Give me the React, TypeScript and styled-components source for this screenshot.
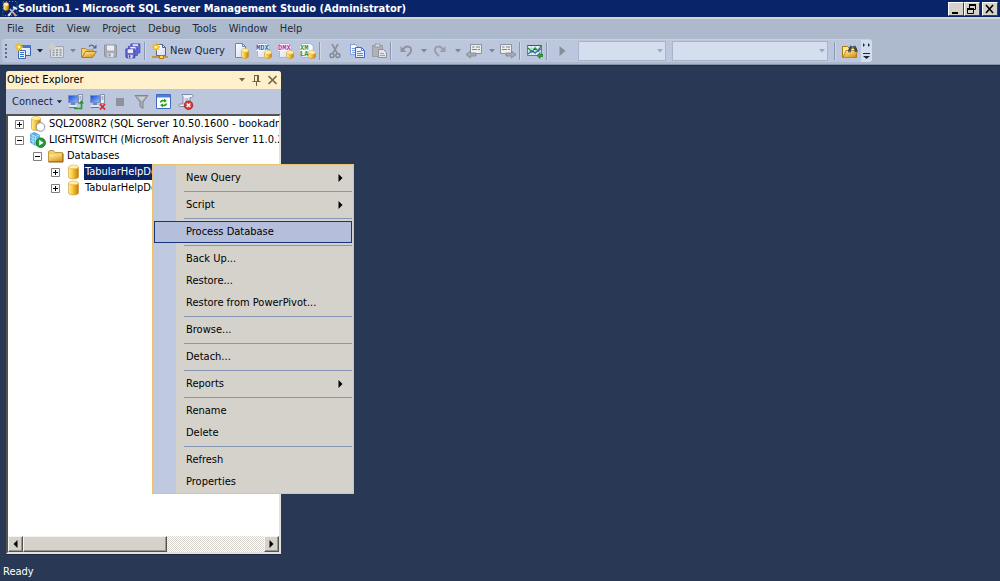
import React from "react";
import styled, { createGlobalStyle, css } from "styled-components";

const GlobalStyle = createGlobalStyle`
  * { box-sizing: border-box; }
  body {
    margin: 0;
    background: #293955;
    color: #000;
    font: 11px/16px "DejaVu Sans Condensed", "Liberation Sans", sans-serif;
  }
  button, select { font: inherit; color: inherit; border: 0; padding: 0; margin: 0; }
  button { background: none; cursor: default; }
  ul { list-style: none; margin: 0; padding: 0; }
`;

const Window = styled.div`
  min-height: 100vh;
  display: flex;
  flex-direction: column;
`;

const TitleBar = styled.header`
  display: flex;
  align-items: center;
  height: 17px;
  padding: 0 2px;
  background: #0a246a;
  color: #fff;
`;

const Title = styled.h1`
  flex: 1;
  margin: 0;
  font-size: 11px;
  line-height: 16px;
  font-weight: bold;
  white-space: nowrap;
`;

const CaptionButton = styled.button<{ $gap?: boolean }>`
  display: flex;
  width: 16px;
  height: 14px;
  margin-left: ${(p) => (p.$gap ? 2 : 0)}px;
  background: #d5d2cb;
  border: 1px solid;
  border-color: #fff #404040 #404040 #fff;
`;

const MenuBar = styled.nav`
  display: flex;
  align-items: center;
  height: 22px;
  padding-left: 7px;
  gap: 12px;
  background: #adb9cd;
  border-top: 2px solid #d5d5d2;
  color: #1b293e;
`;

const ToolStrip = styled.div`
  padding-bottom: 2px;
  background: #adb9cd;
  border-bottom: 1px solid #8592a8;
  box-shadow: 0 1px 0 #1f2c44;
`;

const ToolBar = styled.div`
  display: flex;
  align-items: center;
  width: max-content;
  height: 23px;
  margin-left: 2px;
  padding-left: 3px;
  background: #bcc7de;
  border-top: 1px solid #c8d1e2;
  border-radius: 3px;
  color: #1b293e;
`;

const Grip = styled.span`
  width: 2px;
  height: 14px;
  margin-right: 5px;
  background: repeating-linear-gradient(#5f6e8c 0 2px, transparent 2px 4px);
`;

const ToolButton = styled.button`
  display: flex;
  align-items: center;
  flex: none;
  height: 22px;
  padding: 0 3px;
  gap: 3px;
  white-space: nowrap;
`;

const QueryButton = styled(ToolButton)`
  width: 82px;
  gap: 2px;
`;

const DropButton = styled.button<{ $wide?: boolean; $muted?: boolean }>`
  display: flex;
  justify-content: center;
  align-items: center;
  width: ${(p) => (p.$wide ? 12 : 11)}px;
  height: 22px;
  color: ${(p) => (p.$muted ? "#7f8592" : "#1b293e")};
`;

const Divider = styled.span<{ $left?: number }>`
  width: 5px;
  height: 18px;
  margin-left: ${(p) => p.$left ?? 0}px;
  border-left: 1px solid #8b97b0;
  background: linear-gradient(#d0d8e8, #d0d8e8) left / 1px 100% no-repeat;
`;

const Combo = styled.span<{ $width: number; $left: number }>`
  position: relative;
  display: flex;
  align-items: center;
  width: ${(p) => p.$width}px;
  margin-left: ${(p) => p.$left}px;
  color: #9ea8ba;
  select {
    appearance: none;
    width: 100%;
    height: 20px;
    background: #d5deee;
    border: 1px solid #a9b4c9;
    opacity: 1;
  }
  svg { position: absolute; right: 3px; pointer-events: none; }
`;

const Overflow = styled.button`
  display: flex;
  width: 11px;
  height: 22px;
  background: #d5deee;
  border-radius: 0 3px 3px 0;
`;

const Workspace = styled.main`
  position: relative;
  display: flex;
  flex: 1;
  padding: 6px 6px 8px;
`;

const Panel = styled.section`
  display: flex;
  flex-direction: column;
  width: 275px;
  background: #bcc7de;
  border-radius: 3px 3px 0 0;
  box-shadow: 0 1px 0 #1c2a44;
`;

const PanelHeader = styled.header`
  display: flex;
  align-items: center;
  height: 18px;
  padding: 0 3px 0 1px;
  gap: 5px;
  background: #fff0cc;
  border-radius: 3px 3px 0 0;
  color: #75633d;
  h2 {
    flex: 1;
    margin: 0;
    font-size: 11px;
    line-height: 16px;
    font-weight: normal;
    color: #000;
  }
  button { display: flex; }
`;

const PanelTools = styled.div`
  display: flex;
  align-items: center;
  height: 25px;
  padding: 0 3px;
  color: #1b293e;
`;

const ConnectButton = styled(ToolButton)`
  width: 56px;
`;

const TreeFrame = styled.div`
  display: flex;
  flex-direction: column;
  flex: 1;
  min-height: 0;
  background: #fff;
  border: 2px solid;
  border-color: #55534f #e4e2dd #e4e2dd #55534f;
`;

const Tree = styled.ul`
  flex: 1;
  overflow: hidden;
`;

const TreeRow = styled.li<{ $level: number }>`
  display: flex;
  align-items: center;
  height: 16px;
  padding-left: ${(p) => 7 + p.$level * 18}px;
  white-space: nowrap;
  svg { flex: none; }
  > svg { margin: 0 2px 0 6px; }
`;

const NodeLabel = styled.span<{ $selected?: boolean }>`
  padding: 0 1px;
  line-height: 16px;
  ${(p) =>
    p.$selected &&
    css`
      background: #0a246a;
      color: #fff;
    `}
`;

const Expander = styled.button`
  display: flex;
  flex: none;
`;

const ScrollBar = styled.div`
  display: flex;
  height: 16px;
  background: repeating-conic-gradient(#fff 0 25%, #d9d6cf 0 50%) 0 0 / 2px 2px;
`;

const raised = css`
  background: #d5d2cb;
  border: 1px solid;
  border-color: #f4f3f0 #55534f #55534f #f4f3f0;
  box-shadow: inset -1px -1px 0 #9a978f;
`;

const ScrollArrow = styled.button`
  display: flex;
  align-items: center;
  justify-content: center;
  flex: none;
  width: 15px;
  && { ${raised} }
`;

const ScrollThumb = styled.span`
  width: 144px;
  ${raised}
`;

const ScrollSpace = styled.span`
  flex: 1;
`;

const ContextMenu = styled.div`
  position: absolute;
  left: 152px;
  top: 99px;
  width: 202px;
  padding: 2px 1px 0;
  background: linear-gradient(90deg, #bfc9df 23px, #d5d2cc 23px);
  border: 1px solid #e8c36c;
`;

const MenuItem = styled.button<{ $active?: boolean }>`
  display: flex;
  align-items: center;
  justify-content: space-between;
  width: 100%;
  height: 22px;
  padding: 0 9px 0 32px;
  text-align: left;
  ${(p) =>
    p.$active &&
    css`
      && {
        background: #b5bfdb;
        border: 1px solid #17347f;
        padding: 0 8px 0 31px;
      }
    `}
`;

const MenuLine = styled.hr`
  height: 5px;
  margin: 0 0 0 30px;
  border: 0;
  background: linear-gradient(#8796b5, #8796b5) 0 2px / 100% 1px no-repeat;
`;

const StatusBar = styled.footer`
  height: 19px;
  padding-left: 3px;
  line-height: 20px;
  color: #fff;
`;

/* ---- icons ---- */

const Ico = ({ children, w = 16, h = 16 }: { children: React.ReactNode; w?: number; h?: number }) => (
  <svg width={w} height={h} viewBox={`0 0 ${w} ${h}`} aria-hidden="true" fill="none">
    {children}
  </svg>
);

const HiddenSvg = styled.svg`
  position: absolute;
`;

const Gradients = () => (
  <HiddenSvg width="0" height="0" aria-hidden="true">
    <defs>
      <linearGradient id="gold">
        <stop offset="0" stopColor="#fff0a0" />
        <stop offset="0.4" stopColor="#fbc93c" />
        <stop offset="1" stopColor="#c07c10" />
      </linearGradient>
      <linearGradient id="folder" x2="0.6" y2="1">
        <stop offset="0" stopColor="#fff3a8" />
        <stop offset="1" stopColor="#e3961a" />
      </linearGradient>
      <linearGradient id="screen" x2="1" y2="1">
        <stop offset="0" stopColor="#1c3fd0" />
        <stop offset="1" stopColor="#8fc4ff" />
      </linearGradient>
      <linearGradient id="page" x2="1" y2="1">
        <stop offset="0" stopColor="#fff" />
        <stop offset="1" stopColor="#cfdcf2" />
      </linearGradient>
    </defs>
  </HiddenSvg>
);

const Caret = () => (
  <Ico w={7} h={4}>
    <path d="M1 0h6L4 3.500z" fill="currentColor" />
  </Ico>
);

const Cylinder = ({ x = 0, y = 0, w = 10, h = 14 }) => (
  <g transform={`translate(${x} ${y})`}>
    <path
      d={`M.5 2.5v${h - 5}c0 2.6 ${w - 1} 2.6 ${w - 1} 0v-${h - 5}`}
      fill="url(#gold)"
      stroke="#c9912a"
      strokeWidth=".6"
    />
    <ellipse cx={w / 2} cy="2.4" rx={w / 2 - 0.5} ry="1.9" fill="#fff0a8" stroke="#e0b040" strokeWidth=".6" />
  </g>
);

const Spark = () => (
  <>
    <path d="M4 0v8M0 4h8M1.200 1.200l5.600 5.600M6.800 1.200L1.200 6.800" stroke="#f6b90e" strokeWidth="1.500" />
    <circle cx="4" cy="4" r="1.600" fill="#fff3b0" />
  </>
);

const AppIcon = () => (
  <Ico>
    <path d="M1 .5h14v14H1z" stroke="#4ba33c" strokeDasharray="1 2" />
    <Cylinder x={1} y={1} w={6} h={9} />
    <path d="M6 15l7-8M8 8l6 7" stroke="#aeb7c4" strokeWidth="1.800" />
    <path d="M11 6l4 2M6.500 14.500l2-2" stroke="#e3e6ea" strokeWidth="2" />
    <path d="M11.500 12l3 3" stroke="#d8a060" strokeWidth="1.600" />
  </Ico>
);

const NewProject = () => (
  <Ico>
    <path d="M4.500 2.500h11v10h-11z" fill="url(#page)" stroke="#3866b0" />
    <path d="M4 2h12v3H4z" fill="#3f78d8" />
    <path d="M3.500 7.500h7v8h-7z" fill="#e8f1ff" stroke="#3c68b4" />
    <path d="M5 9.500h4M5 11.500h4M5 13.500h4" stroke="#3a6fc4" />
    <Spark />
  </Ico>
);

const NewItemMuted = () => (
  <Ico>
    <path d="M2.500 3.500h13v11h-13z" fill="#dcdde0" stroke="#a1a5ae" />
    <path d="M4.500 7h10M4.500 9.500h10M4.500 12h10" stroke="#8d929c" strokeWidth="1.400" strokeDasharray="2 1.500" />
    <path d="M4 0v8M0 4h8M1.500 1.500l5 5M6.500 1.500l-5 5" stroke="#cfcdc8" strokeWidth="1.400" />
  </Ico>
);

const OpenFolder = () => (
  <Ico>
    <path d="M.5 14.500v-9h4l1.500 1.500h6v3" fill="#f7d268" stroke="#b58a2c" />
    <path d="M1 14.500L4.500 8.500h11l-4 6z" fill="url(#folder)" stroke="#b07a18" />
    <path d="M8 3.500c1.500-2 4-2 5.500.5" stroke="#4d6a98" strokeWidth="1.300" />
    <path d="M15.500 1.500v4h-4z" fill="#4d6a98" />
  </Ico>
);

const Disk = ({ fill, edge, x = 0, y = 0, s = 1 }: { fill: string; edge: string; x?: number; y?: number; s?: number }) => (
  <g transform={`translate(${x} ${y}) scale(${s})`}>
    <path d="M.5.5h12v12h-11l-1-1z" fill={fill} stroke={edge} />
    <path d="M3 1h7v5H3z" fill="#eceef4" />
    <path d="M3.500 8.500h6v4h-6z" fill="#dfe2ea" />
    <path d="M4.500 9h2v3h-2z" fill={edge} />
  </g>
);

const Save = () => (
  <Ico>
    <Disk x={1} y={1.5} fill="#a7abb4" edge="#8f949f" />
  </Ico>
);

const SaveAll = () => (
  <Ico>
    <Disk x={5.5} y={0.5} s={0.75} fill="#6b70dc" edge="#3a3bb0" />
    <Disk x={3} y={3} s={0.75} fill="#6b70dc" edge="#3a3bb0" />
    <Disk x={0.5} y={5.5} s={0.75} fill="#6468dc" edge="#3334a4" />
  </Ico>
);

const NewQuery = () => (
  <Ico>
    <path d="M4.500 1.500h6l3 3v8h-9z" fill="url(#page)" stroke="#52678f" />
    <path d="M10.500 1.500v3h3" stroke="#52678f" />
    <Spark />
    <path d="M0 14h16M9.500 12v2" stroke="#c98416" strokeWidth="1.600" />
    <path d="M7.500 12.500h4v3h-4z" fill="#ffd65a" stroke="#b87612" />
  </Ico>
);

const DbPage = () => (
  <Ico>
    <path d="M1.500.5h7l3 3v11h-10z" fill="url(#page)" stroke="#7086b0" />
    <path d="M8.500.5v3h3" stroke="#7086b0" />
    <Cylinder x={7} y={5} w={8} h={11} />
  </Ico>
);

const QueryKind = ({ top, bottom, color }: { top: string; bottom?: string; color: string }) => (
  <Ico>
    <path d="M1.500.5h9l3 3v11h-12z" fill="url(#page)" stroke="#a9b7d2" />
    <path d="M0 2h12v6H0z" fill="#f6f9ff" />
    <text x="0" y="7" fontSize="7" fontWeight="bold" fontFamily="Liberation Mono, monospace" fill={color}>
      {top}
    </text>
    {bottom && (
      <text x="0" y="13" fontSize="7" fontWeight="bold" fontFamily="Liberation Mono, monospace" fill={color}>
        {bottom}
      </text>
    )}
    <Cylinder x={8} y={7} w={8} h={9} />
  </Ico>
);

const Cut = () => (
  <Ico>
    <path d="M5 1l5 9M11 1L6 10" stroke="#8b909b" strokeWidth="1.600" />
    <circle cx="5" cy="12.500" r="2" stroke="#81868f" strokeWidth="1.400" />
    <circle cx="10.800" cy="12.500" r="2" stroke="#81868f" strokeWidth="1.400" />
  </Ico>
);

const Copy = () => (
  <Ico>
    <path d="M1.500 1.500h5l3 3v7h-8z" fill="#f4f8ff" stroke="#7f9bdc" />
    <path d="M3 5.500h4M3 7.500h4M3 9.500h4" stroke="#7c9ce0" />
    <path d="M6.500 4.500h6l3 3v7h-9z" fill="#eaf1ff" stroke="#3f66c4" />
    <path d="M12.500 4.500v3h3M8 8.500h4M8 10.500h6M8 12.500h6" stroke="#5c84dc" />
  </Ico>
);

const Paste = () => (
  <Ico>
    <path d="M1.500 2.500h10v11h-10z" fill="#b0b2b8" stroke="#999ca5" />
    <path d="M4 1h5v3H4z" fill="#d6d7da" stroke="#8d919a" strokeWidth=".8" />
    <path d="M7.500 6.500h5l3 3v5h-8z" fill="#e4e5e8" stroke="#8b8f98" />
    <path d="M9 10.500h4M9 12.500h5" stroke="#9da1aa" />
  </Ico>
);

const Undo = () => (
  <Ico>
    <path d="M5 6.500c3-5 9-3 8 1.500-.4 2-2 3.500-4 5" stroke="#8e939e" strokeWidth="1.900" />
    <path d="M2.500 3v6h6z" fill="#8e939e" />
  </Ico>
);

const Redo = () => (
  <Ico>
    <path d="M11 6.500C8 1.500 2 3.500 3 8c.4 2 2 3.500 4 5" stroke="#989da8" strokeWidth="1.900" />
    <path d="M13.500 3v6h-6z" fill="#989da8" />
  </Ico>
);

const NavBack = () => (
  <Ico>
    <path d="M4.500 1.500h11v9h-11z" fill="#eceded" stroke="#8c9099" />
    <path d="M6 4h2.500M10 4h4M6 6.500h5M12 6.500h2" stroke="#7e838d" strokeWidth="1.200" />
    <path d="M0 11.500L4.500 8v2H10v3H4.500v2z" fill="#a5a9b1" stroke="#80858f" strokeWidth=".8" />
  </Ico>
);

const NavForward = () => (
  <Ico>
    <path d="M.5 1.500h11v9H.5z" fill="#eceded" stroke="#8c9099" />
    <path d="M2 4h2.500M6 4h4M2 6.500h5M8 6.500h2" stroke="#7e838d" strokeWidth="1.200" />
    <path d="M16 11.500L11.500 8v2H6v3h5.500v2z" fill="#a5a9b1" stroke="#80858f" strokeWidth=".8" />
  </Ico>
);

const Activity = () => (
  <Ico>
    <path d="M.5 2.500h14v10H.5z" fill="#dff0fb" stroke="#5a7cb4" />
    <path d="M.5 2.500h14" stroke="#33568e" />
    <path d="M1 5.500h13M1 8.500h13M4.500 3v9M8.500 3v9" stroke="#a9c3df" strokeWidth=".6" />
    <path d="M1 5l4 4 3-4 3 3 3-5" stroke="#248b2b" strokeWidth="1.300" />
    <path d="M1 11l4-3 3 2 6-4" stroke="#2f62c0" strokeWidth="1.100" />
    <path d="M10 12.500l3-3v2h3v2h-3v2z" fill="#36a33a" stroke="#17701c" strokeWidth=".7" />
  </Ico>
);

const Play = () => (
  <Ico>
    <path d="M5.500 3v10l6-5z" fill="#878d9a" />
  </Ico>
);

const FindFolder = () => (
  <Ico>
    <path d="M.5 3.500h5l1.500 1.500h7.500v9.500H.5z" fill="#ffe98e" stroke="#a67a17" />
    <path d="M1 14.500l3-7h11.500l-2.500 7z" fill="url(#folder)" stroke="#c08a20" />
    <path d="M7 8l2.500-5M14.500 8L12 3" stroke="#3c4452" strokeWidth="2.600" />
    <path d="M9 4.500h4M6 8.500h3M12.500 8.500h3" stroke="#59657a" strokeWidth="1.600" />
  </Ico>
);

const Server = ({ children }: { children: React.ReactNode }) => (
  <Ico>
    <path d="M.5 1.500h9v7h-9z" fill="url(#screen)" stroke="#7390cc" />
    <path d="M3 9h4v2H3z" fill="#6c86bd" />
    <path d="M1 12h8" stroke="#dfe7f5" strokeWidth="2" />
    <path d="M1 13.500h8" stroke="#5674b5" />
    <path d="M10.500.5h4v9h-4z" fill="#e8edf6" stroke="#8391ad" />
    <path d="M11.500 3h2M11.500 5h2" stroke="#6f7f9e" />
    {children}
  </Ico>
);

const ConnectIcon = () => (
  <Server>
    <path d="M6 14.500h7.500V9" stroke="#269c2c" strokeWidth="1.600" />
    <path d="M10.500 9.500l3-3.500 2.500 3.500z" fill="#269c2c" />
  </Server>
);

const DisconnectIcon = () => (
  <Server>
    <path d="M10 10l5 5.500M15 10l-5 5.500" stroke="#e2281c" strokeWidth="1.800" />
  </Server>
);

const Stop = () => (
  <Ico>
    <path d="M4 4h8v8H4z" fill="#8d929d" />
  </Ico>
);

const Filter = () => (
  <Ico>
    <path d="M1 1.500h13L9 8v6.500l-3-2V8z" fill="#a9adb6" stroke="#80858f" />
    <path d="M4 3h7L8 7z" fill="#cdd0d6" />
  </Ico>
);

const Refresh = () => (
  <Ico>
    <path d="M.5.5h14v14H.5z" fill="#fff" stroke="#3e6cc4" />
    <path d="M1 1h13v2.500H1z" fill="#4a80dc" />
    <path d="M4.500 8.500c.5-2 3-2.500 4.500-1.500M10.500 9.500c-.5 2-3 2.500-4.500 1.500" stroke="#2a9a24" strokeWidth="1.600" />
    <path d="M8 4.500l3 2.500-3 1.500zM7 13.500l-3-2.500 3-1.500z" fill="#2a9a24" />
  </Ico>
);

const ScriptStop = () => (
  <Ico>
    <path d="M4 .5h9.500c2 0 2 3 0 3H12v9H2c-1.500 0-1.500-2.500 0-2.500h3V3C5 1.500 3.500 1 4 .5z" fill="#eef2fa" stroke="#7b8aa8" />
    <path d="M6.500 5h4M6.500 7h4" stroke="#8b9abb" />
    <circle cx="10.500" cy="11.200" r="4.300" fill="#d93a35" stroke="#a31d1a" strokeWidth=".8" />
    <path d="M8.700 9.500l3.600 3.500M12.300 9.500L8.700 13" stroke="#fff" strokeWidth="1.400" />
  </Ico>
);

const SqlServer = () => (
  <Ico>
    <Cylinder x={1} y={0} w={10} h={15} />
    <circle cx="10.500" cy="11" r="4.300" fill="#fff" stroke="#8a8f99" />
  </Ico>
);

const AnalysisServer = () => (
  <Ico>
    <path d="M.5 2l4-1.500 5 2.500v9l-4 1.500-5-3z" fill="#56b4ea" stroke="#3b8bc8" strokeWidth=".6" />
    <path d="M.5 5l5 2.500 4-1.500M.5 8l5 2.500 4-1.500M5.500 4.500v9M3 3.200v8.800M.5 2l5 2.500 4-1.500" stroke="#c6ebff" strokeWidth=".8" />
    <circle cx="10.700" cy="10.700" r="4.800" fill="#229a35" stroke="#12702a" strokeWidth=".8" />
    <path d="M9.200 7.800v5.800l4.300-2.900z" fill="#fff" />
  </Ico>
);

const Folder = () => (
  <Ico>
    <path d="M.5 3.500l1-1h4l1.500 2h7.500v9H.5z" fill="#f3cb5e" stroke="#c49a3c" />
    <path d="M1.500 6.500h13v7h-13z" fill="url(#folder)" />
    <path d="M.5 14h14.500V5.500" stroke="#7d5a10" />
  </Ico>
);

const Database = () => (
  <Ico>
    <Cylinder x={2} y={0.5} w={11} h={15} />
  </Ico>
);

/* ---- data ---- */

const menus = ["File", "Edit", "View", "Project", "Debug", "Tools", "Window", "Help"];

type Node = { level: number; open: boolean; icon: React.ReactNode; label: string; selected?: boolean };

const nodes: Node[] = [
  { level: 0, open: false, icon: <SqlServer />, label: "SQL2008R2 (SQL Server 10.50.1600 - bookadmin)" },
  { level: 0, open: true, icon: <AnalysisServer />, label: "LIGHTSWITCH (Microsoft Analysis Server 11.0.2100)" },
  { level: 1, open: true, icon: <Folder />, label: "Databases" },
  { level: 2, open: false, icon: <Database />, label: "TabularHelpDesk", selected: true },
  { level: 2, open: false, icon: <Database />, label: "TabularHelpDesk" },
];

type Item = { label: string; sub?: boolean; active?: boolean };

const groups: Item[][] = [
  [{ label: "New Query", sub: true }],
  [{ label: "Script", sub: true }],
  [{ label: "Process Database", active: true }],
  [{ label: "Back Up..." }, { label: "Restore..." }, { label: "Restore from PowerPivot..." }],
  [{ label: "Browse..." }],
  [{ label: "Detach..." }],
  [{ label: "Reports", sub: true }],
  [{ label: "Rename" }, { label: "Delete" }],
  [{ label: "Refresh" }, { label: "Properties" }],
];

const Tool = ({ name, children }: { name: string; children: React.ReactNode }) => (
  <ToolButton aria-label={name}>{children}</ToolButton>
);

export default function App() {
  return (
    <Window>
      <GlobalStyle />
      <Gradients />
      <TitleBar>
        <AppIcon />
        <Title>Solution1 - Microsoft SQL Server Management Studio (Administrator)</Title>
        <CaptionButton aria-label="Minimize">
          <Ico w={14} h={12}>
            <path d="M3 9h6v2H3z" fill="#000" />
          </Ico>
        </CaptionButton>
        <CaptionButton aria-label="Restore">
          <Ico w={14} h={12}>
            <path d="M4 1h7v2H4zM2 5h7v2H2z" fill="#000" />
            <path d="M4.500 5V1.500h6v5H8.500M2.500 5.500h6v5h-6z" stroke="#000" />
          </Ico>
        </CaptionButton>
        <CaptionButton aria-label="Close" $gap>
          <Ico w={14} h={12}>
            <path d="M3 2l7 8M10 2l-7 8" stroke="#000" strokeWidth="1.600" />
          </Ico>
        </CaptionButton>
      </TitleBar>
      <MenuBar>
        {menus.map((m) => (
          <button key={m}>{m}</button>
        ))}
      </MenuBar>
      <ToolStrip>
        <ToolBar>
          <Grip />
          <Tool name="New Project"><NewProject /></Tool>
          <DropButton aria-label="New Project options"><Caret /></DropButton>
          <Tool name="Add Item"><NewItemMuted /></Tool>
          <DropButton aria-label="Add Item options" $muted><Caret /></DropButton>
          <Tool name="Open File"><OpenFolder /></Tool>
          <Tool name="Save"><Save /></Tool>
          <Tool name="Save All"><SaveAll /></Tool>
          <Divider />
          <QueryButton><NewQuery />New Query</QueryButton>
          <Tool name="Database Engine Query"><DbPage /></Tool>
          <Tool name="MDX Query"><QueryKind top="MDX" color="#1b62b8" /></Tool>
          <Tool name="DMX Query"><QueryKind top="DMX" color="#d01fa8" /></Tool>
          <Tool name="XMLA Query"><QueryKind top="XM" bottom="LA" color="#2b9a4a" /></Tool>
          <Divider />
          <Tool name="Cut"><Cut /></Tool>
          <Tool name="Copy"><Copy /></Tool>
          <Tool name="Paste"><Paste /></Tool>
          <Divider />
          <Tool name="Undo"><Undo /></Tool>
          <DropButton aria-label="Undo list" $wide $muted><Caret /></DropButton>
          <Tool name="Redo"><Redo /></Tool>
          <DropButton aria-label="Redo list" $wide $muted><Caret /></DropButton>
          <Tool name="Navigate Backward"><NavBack /></Tool>
          <DropButton aria-label="Navigate list" $wide $muted><Caret /></DropButton>
          <Tool name="Navigate Forward"><NavForward /></Tool>
          <Divider />
          <Tool name="Activity Monitor"><Activity /></Tool>
          <Divider />
          <Tool name="Start"><Play /></Tool>
          <Combo $width={88} $left={5}>
            <select aria-label="Solution configuration" disabled />
            <Caret />
          </Combo>
          <Combo $width={156} $left={6}>
            <select aria-label="Find" disabled />
            <Caret />
          </Combo>
          <Divider $left={6} />
          <Tool name="Find in Files"><FindFolder /></Tool>
          <Overflow aria-label="Toolbar options">
            <Ico w={11} h={22}>
              <path d="M2 3l2 2-2 2zM7 3l2 2-2 2z" fill="#1b293e" />
              <path d="M2 13.500h7" stroke="#1b293e" />
              <path d="M2 16h7l-3.500 3z" fill="#1b293e" />
            </Ico>
          </Overflow>
        </ToolBar>
      </ToolStrip>
      <Workspace>
        <Panel>
          <PanelHeader>
            <h2>Object Explorer</h2>
            <button aria-label="Window position"><Caret /></button>
            <button aria-label="Auto hide">
              <Ico w={12} h={12}>
                <path d="M4.500 1v6M8 1v6M4 1.500h5M2.500 7.500h8M6.500 8v4" stroke="currentColor" />
                <path d="M7 1h2v6H7z" fill="currentColor" />
              </Ico>
            </button>
            <button aria-label="Close panel">
              <Ico w={11} h={10}>
                <path d="M1.500 1l8 8M9.500 1l-8 8" stroke="currentColor" strokeWidth="1.600" />
              </Ico>
            </button>
          </PanelHeader>
          <PanelTools>
            <ConnectButton>Connect<Caret /></ConnectButton>
            <Tool name="Connect server"><ConnectIcon /></Tool>
            <Tool name="Disconnect"><DisconnectIcon /></Tool>
            <Tool name="Stop"><Stop /></Tool>
            <Tool name="Filter"><Filter /></Tool>
            <Tool name="Refresh tree"><Refresh /></Tool>
            <Tool name="Script error"><ScriptStop /></Tool>
          </PanelTools>
          <TreeFrame>
            <Tree>
              {nodes.map((n, i) => (
                <TreeRow key={i} $level={n.level}>
                  <Expander aria-label={n.open ? "Collapse" : "Expand"}>
                    <Ico w={9} h={9}>
                      <path d="M.5.5h8v8h-8z" fill="#fff" stroke="#808080" />
                      <path d={n.open ? "M2 4.500h5" : "M2 4.500h5M4.500 2v5"} stroke="#000" />
                    </Ico>
                  </Expander>
                  {n.icon}
                  <NodeLabel $selected={n.selected}>{n.label}</NodeLabel>
                </TreeRow>
              ))}
            </Tree>
            <ScrollBar>
              <ScrollArrow aria-label="Scroll left">
                <Ico w={5} h={8}><path d="M4.500 0v8L.5 4z" fill="#000" /></Ico>
              </ScrollArrow>
              <ScrollThumb />
              <ScrollSpace />
              <ScrollArrow aria-label="Scroll right">
                <Ico w={5} h={8}><path d="M.5 0v8l4-4z" fill="#000" /></Ico>
              </ScrollArrow>
            </ScrollBar>
          </TreeFrame>
        </Panel>
        <ContextMenu role="menu">
          {groups.map((g, i) => (
            <React.Fragment key={i}>
              {i > 0 && <MenuLine />}
              {g.map((item) => (
                <MenuItem key={item.label} role="menuitem" $active={item.active}>
                  {item.label}
                  {item.sub && (
                    <Ico w={5} h={8}><path d="M.5 0v8l4-4z" fill="#000" /></Ico>
                  )}
                </MenuItem>
              ))}
            </React.Fragment>
          ))}
        </ContextMenu>
      </Workspace>
      <StatusBar>Ready</StatusBar>
    </Window>
  );
}
